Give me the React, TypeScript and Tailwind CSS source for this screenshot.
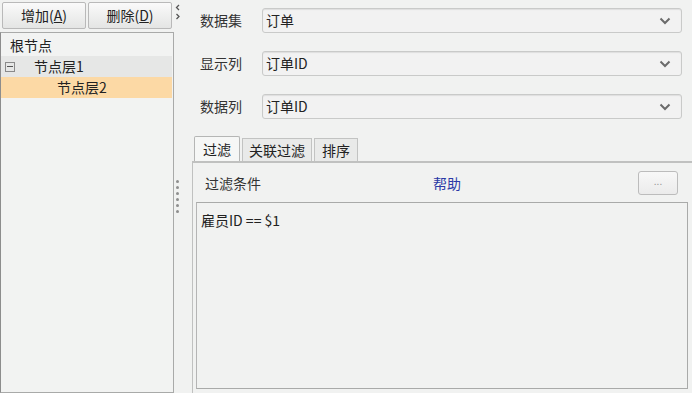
import React from 'react';

const font = { fontFamily: '"Noto Sans CJK SC", "Noto Sans", sans-serif' };

function Chevron() {
  return (
    <svg width="12" height="8" viewBox="0 0 12 8" className="text-[#6b6b6b]">
      <path d="M1.5 1.5 L6 6 L10.5 1.5" fill="none" stroke="currentColor" strokeWidth="2" />
    </svg>
  );
}

function Field({ label, value }: { label: string; value: string }) {
  return (
    <div className="flex items-center h-[25px]">
      <span className="w-[80px] pl-[18px] text-[14px] text-[#333]">{label}</span>
      <div className="flex-1 mr-[10px] h-[25px] flex items-center justify-between pl-[3px] pr-[10px] border border-[#c9cac9] rounded-[3px] bg-[#f2f2f2] shadow-[inset_0_1px_1px_rgba(0,0,0,0.08)]">
        <span className="text-[14px] text-[#222]">{value}</span>
        <Chevron />
      </div>
    </div>
  );
}

export default function App() {
  return (
    <div className="flex w-[692px] h-[393px] bg-[#f1f2f1] overflow-hidden text-[#222]" style={font}>
      {/* left */}
      <div className="w-[174px] flex flex-col">
        <div className="flex gap-[2px] pl-[2px] pt-[2px]">
          <button className="w-[84px] h-[27px] border border-[#b9b9b9] rounded-[2px] bg-gradient-to-b from-[#fafafa] to-[#e4e5e4] text-[14px] text-[#222]">
            增加(<span className="underline">A</span>)
          </button>
          <button className="w-[84px] h-[27px] border border-[#b9b9b9] rounded-[2px] bg-gradient-to-b from-[#fafafa] to-[#e4e5e4] text-[14px] text-[#222]">
            删除(<span className="underline">D</span>)
          </button>
        </div>
        <div className="flex-1 mt-[3px] border border-[#a9aaa9] border-l-[#8d8d8d] bg-[#f2f3f2] pt-[2px] pr-[1px]">
          <div className="h-[21px] flex items-center pl-[9px] text-[14px]">根节点</div>
          <div className="h-[21px] flex items-center bg-[#e6e7e6] text-[14px]">
            <span className="ml-[4px] w-[10px] h-[10px] border border-[#8a8a8a] flex items-center justify-center">
              <span className="w-[6px] h-[1px] bg-[#555]" />
            </span>
            <span className="ml-[19px]">节点层1</span>
          </div>
          <div className="h-[21px] flex items-center bg-[#fcd9a5] text-[14px] pl-[56px]">节点层2</div>
        </div>
      </div>

      {/* splitter */}
      <div className="w-[7px] flex flex-col items-center">
        <svg width="5" height="16" viewBox="0 0 5 16" className="mt-[4px] text-[#555]">
          <path d="M4 1 L1.5 3.5 L4 6" fill="none" stroke="currentColor" strokeWidth="1.3" />
          <path d="M1.5 10 L4 12.5 L1.5 15" fill="none" stroke="currentColor" strokeWidth="1.3" />
        </svg>
        <div className="mt-[160px] flex flex-col gap-[3px]">
          {[0, 1, 2, 3, 4, 5].map((i) => (
            <span key={i} className="w-[3px] h-[3px] rounded-full bg-[#8e8e8e]" />
          ))}
        </div>
      </div>

      {/* right */}
      <div className="flex-1 flex flex-col">
        <div className="flex flex-col gap-[18px] mt-[8px] pl-[1px]">
          <Field label="数据集" value="订单" />
          <Field label="显示列" value="订单ID" />
          <Field label="数据列" value="订单ID" />
        </div>

        <div className="mt-[17px] pl-[11px] flex-1 flex flex-col">
          <div className="flex items-end h-[25px] gap-[2px] pl-[2px]">
            <div className="h-[25px] px-[8px] flex items-center border border-b-0 border-[#b5b6b5] bg-[#f6f7f6] text-[14px] rounded-t-[2px]">过滤</div>
            <div className="h-[23px] px-[6px] flex items-center border border-b-0 border-[#c2c3c2] bg-[#e9eae9] text-[14px]">关联过滤</div>
            <div className="h-[23px] px-[7px] flex items-center border border-b-0 border-[#c2c3c2] bg-[#e9eae9] text-[14px]">排序</div>
          </div>
          <div className="flex-1 border-t-[2px] border-l border-[#c0c1c0] flex flex-col pl-[3px] pb-[4px]">
            <div className="flex items-center h-[38px] mt-[1px]">
              <span className="ml-[9px] text-[14px] text-[#333]">过滤条件</span>
              <span className="ml-[172px] text-[14px] text-[#2b39a6]">帮助</span>
              <button className="ml-auto mr-[14px] w-[40px] h-[24px] border border-[#bcbcbc] rounded-[3px] bg-gradient-to-b from-[#f8f8f8] to-[#ebebeb] text-[10px] text-[#999] leading-none pb-[4px]">
                ...
              </button>
            </div>
            <div className="flex-1 mr-[4px] border border-[#a9aaa9] border-l-[#b5b5b5] bg-[#f1f2f1] pl-[4px] pt-[7px] text-[14px] text-[#222]">
              雇员ID == $1
            </div>
          </div>
        </div>
      </div>
    </div>
  );
}
